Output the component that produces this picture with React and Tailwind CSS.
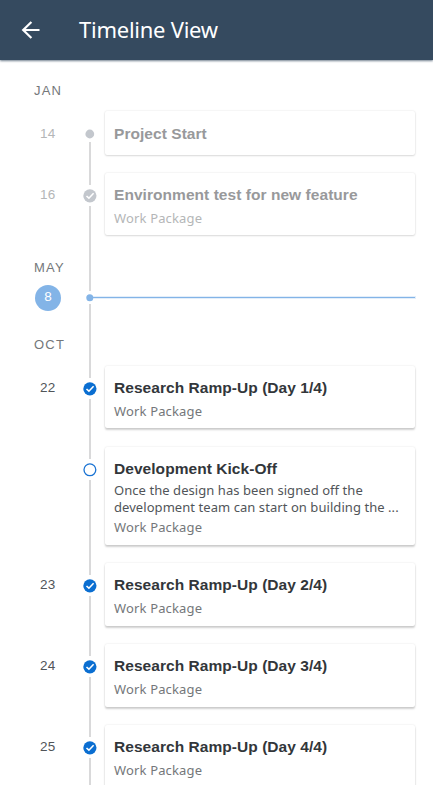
function Check({ color }) {
  return (
    <svg width="14" height="14" viewBox="0 0 14 14" className="block">
      <circle cx="6.9" cy="6.8" r="6.6" fill={color} />
      <path d="M3.5 7 5.9 9.2 10.6 4.3" fill="none" stroke="#fff" strokeWidth="1.6" />
    </svg>
  );
}

function Marker({ kind }) {
  if (kind === "start") {
    return (
      <svg width="10" height="10" viewBox="0 0 10 10" className="block">
        <circle cx="4.8" cy="5" r="4.4" fill="#c3c7cd" />
      </svg>
    );
  }
  if (kind === "today") {
    return (
      <svg width="8" height="8" viewBox="0 0 8 8" className="relative block">
        <circle cx="3.8" cy="3.8" r="3.5" fill="#83b4e7" />
      </svg>
    );
  }
  if (kind === "open") {
    return (
      <svg width="14" height="14" viewBox="0 0 14 14" className="block">
        <circle cx="6.9" cy="6.8" r="5.9" fill="#fff" stroke="#1a73d3" strokeWidth="1.3" />
      </svg>
    );
  }
  return <Check color={kind === "past" ? "#c3c7cd" : "#0a6ed1"} />;
}

function Rail({ kind, first }) {
  return (
    <div className="flex w-[14px] shrink-0 flex-col items-center">
      <div className={first ? "h-[15px]" : "h-[12px] w-[2px] bg-[#d9d9da]"} />
      <div className={`flex items-center justify-center ${first ? "h-4" : "h-[21px]"}`}>
        <Marker kind={kind} />
      </div>
      <div className="w-[2px] grow bg-[#d9d9da]" />
    </div>
  );
}

function Month({ name, className, line = true }) {
  return (
    <div className={`flex ${className}`}>
      <div className="flex w-[83px] flex-col justify-end pl-[34px] font-['Liberation_Sans',Arial,sans-serif] text-[13px] leading-5 tracking-[1.2px] text-[#74777a]">
        {name}
      </div>
      <div className="flex w-[14px] justify-center">{line && <div className="w-[2px] bg-[#d9d9da]" />}</div>
    </div>
  );
}

function Item({ day, kind, first, title, children, height, card }) {
  const past = kind === "past" || kind === "start";
  return (
    <div className={`flex shrink-0 ${height}`}>
      <div
        className={`w-[83px] pl-[40px] font-['Liberation_Sans',Arial,sans-serif] text-[13.5px] leading-5 tracking-[0.2px] ${
          first ? "pt-[13px]" : "pt-[12px]"
        } ${past ? "text-[#b4b6b7]" : "text-[#515559]"}`}
      >
        {day}
      </div>
      <Rail kind={kind} first={first} />
      <div
        className={`ml-2 w-[310px] rounded-[2px] bg-white px-[9px] ${first ? "pt-[12px]" : "pt-[11px]"} ${card} ${
          past
            ? "shadow-[0_0_2px_rgba(0,0,0,0.12),0_1px_2px_rgba(0,0,0,0.12)]"
            : "shadow-[0_0_2px_rgba(0,0,0,0.12),0_2px_2px_rgba(0,0,0,0.18)]"
        }`}
      >
        <h2
          className={`whitespace-nowrap font-['Liberation_Sans',Arial,sans-serif] text-[15.5px] font-bold leading-[22px] tracking-[0.05px] ${
            past ? "text-[#98999b]" : "text-[#32363a]"
          }`}
        >
          {title}
        </h2>
        {children}
      </div>
    </div>
  );
}

function Kind({ past, className = "mt-[3px]" }) {
  return (
    <p className={`whitespace-nowrap text-[13px] leading-[18px] tracking-[0.15px] ${className} ${past ? "text-[#b4b6b7]" : "text-[#74777a]"}`}>
      Work Package
    </p>
  );
}

export default function App() {
  return (
    <div className="flex h-[785px] w-[433px] flex-col overflow-hidden bg-white font-['Noto_Sans','Open_Sans',sans-serif]">
      <header className="flex h-[60px] shrink-0 items-center bg-[#354a5f] pl-[21px] text-white shadow-[0_1px_2px_rgba(53,74,95,0.7)]">
        <svg width="19" height="18" viewBox="0 0 19 18" fill="none" stroke="currentColor" strokeWidth="2.2">
          <path d="M18.5 9H2M10.4 1 2.2 9l8.2 8" />
        </svg>
        <h1 className="-mt-[2px] ml-[39px] whitespace-nowrap text-[22px] leading-8 tracking-[-0.25px]">Timeline View</h1>
      </header>
      <main className="flex flex-col">
        <Month name="JAN" line={false} className="mb-[10px] h-[41px]" />
        <Item day="14" kind="start" first title="Project Start" height="h-[62px]" card="h-[44px]" />
        <Item day="16" kind="past" title="Environment test for new feature" height="h-[78px]" card="h-[62px]">
          <Kind past />
        </Item>
        <Month name="MAY" className="h-[27px]" />
        <div className="flex h-[39px] items-center">
          <div className="w-[83px] pl-[35px]">
            <div className="flex size-[26px] items-center justify-center rounded-full bg-[#83b4e7] font-['Liberation_Sans',Arial,sans-serif] text-[13.5px] text-white">8</div>
          </div>
          <div className="flex h-full w-[14px] flex-col items-center">
            <div className="h-[13px] w-[2px] bg-[#d9d9da]" />
            <div className="flex h-[13px] items-center">
              <Marker kind="today" />
            </div>
            <div className="w-[2px] grow bg-[#d9d9da]" />
          </div>
          <div className="-ml-[4px] h-px w-[322px] bg-[#83b4e7] shadow-[0_0_0_1px_#e3eefa]" />
        </div>
        <Month name="OCT" className="h-[38px]" />
        <div className="flex h-[11px] justify-start pl-[89px]">
          <div className="w-[2px] bg-[#d9d9da]" />
        </div>
        <Item day="22" kind="done" title="Research Ramp-Up (Day 1/4)" height="h-[81px]" card="h-[62px]">
          <Kind />
        </Item>
        <Item kind="open" title="Development Kick-Off" height="h-[116px]" card="h-[98px]">
          <div className="mt-[2px] whitespace-nowrap text-[13px] leading-[17px] tracking-[0.06px] text-[#515559]">
            <p>Once the design has been signed off the</p>
            <p>development team can start on building the ...</p>
          </div>
          <Kind className="mt-[2px]" />
        </Item>
        <Item day="23" kind="done" title="Research Ramp-Up (Day 2/4)" height="h-[81px]" card="h-[63px]">
          <Kind />
        </Item>
        <Item day="24" kind="done" title="Research Ramp-Up (Day 3/4)" height="h-[81px]" card="h-[63px]">
          <Kind />
        </Item>
        <Item day="25" kind="done" title="Research Ramp-Up (Day 4/4)" height="h-[81px]" card="h-[63px]">
          <Kind />
        </Item>
      </main>
    </div>
  );
}
